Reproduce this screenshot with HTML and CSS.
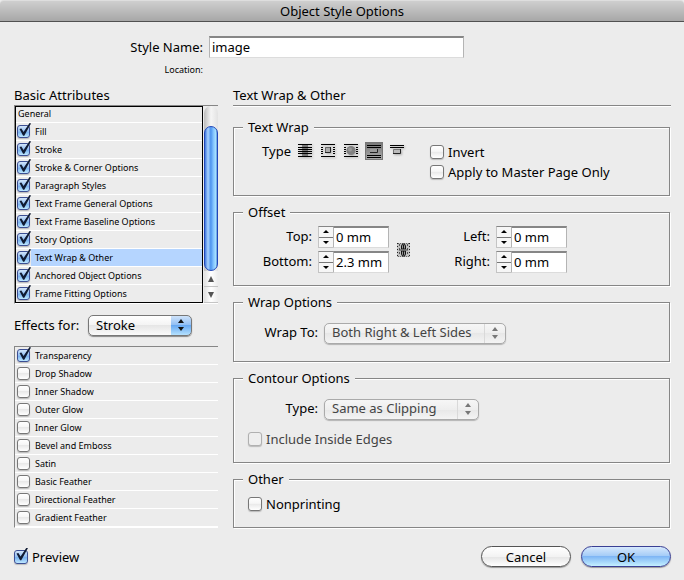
FILE: index.html
```html
<!DOCTYPE html>
<html lang="en">
<head>
<meta charset="utf-8">
<title>Object Style Options</title>
<link rel="stylesheet" href="styles.css">
</head>
<body>
<form class="dialog">
  <header class="titlebar"><h1>Object Style Options</h1></header>

  <div class="identity">
    <label for="style-name">Style Name:</label>
    <input class="field" id="style-name" type="text" value="image">
    <span class="location">Location:</span>
  </div>

  <div class="columns">
    <section class="sidebar">
      <h2>Basic Attributes</h2>
      <div class="listbox">
        <ul class="rows focused">
          <li class="general">General</li>
          <li><label><input type="checkbox" checked><span>Fill</span></label></li>
          <li><label><input type="checkbox" checked><span>Stroke</span></label></li>
          <li><label><input type="checkbox" checked><span>Stroke &amp; Corner Options</span></label></li>
          <li><label><input type="checkbox" checked><span>Paragraph Styles</span></label></li>
          <li><label><input type="checkbox" checked><span>Text Frame General Options</span></label></li>
          <li><label><input type="checkbox" checked><span>Text Frame Baseline Options</span></label></li>
          <li><label><input type="checkbox" checked><span>Story Options</span></label></li>
          <li class="selected"><label><input type="checkbox" checked><span>Text Wrap &amp; Other</span></label></li>
          <li><label><input type="checkbox" checked><span>Anchored Object Options</span></label></li>
          <li><label><input type="checkbox" checked><span>Frame Fitting Options</span></label></li>
        </ul>
        <div class="scrollbar">
          <div class="track"><div class="thumb"></div></div>
          <button type="button" aria-label="Scroll up"><svg width="8" height="6" viewBox="0 0 8 6"><path d="M4 0L7 6H1z"/></svg></button>
          <button type="button" aria-label="Scroll down"><svg width="8" height="6" viewBox="0 0 8 6"><path d="M1 0H7L4 6z"/></svg></button>
        </div>
      </div>

      <div class="effects">
        <label for="effects">Effects for:</label>
        <span class="popup blue">
          <select id="effects"><option>Stroke</option></select>
          <svg width="8" height="12" viewBox="0 0 8 12"><path d="M4 0L7 4H1zM1 8H7L4 12z"/></svg>
        </span>
      </div>

      <div class="listbox">
        <ul class="rows">
          <li><label><input type="checkbox" checked><span>Transparency</span></label></li>
          <li><label><input type="checkbox"><span>Drop Shadow</span></label></li>
          <li><label><input type="checkbox"><span>Inner Shadow</span></label></li>
          <li><label><input type="checkbox"><span>Outer Glow</span></label></li>
          <li><label><input type="checkbox"><span>Inner Glow</span></label></li>
          <li><label><input type="checkbox"><span>Bevel and Emboss</span></label></li>
          <li><label><input type="checkbox"><span>Satin</span></label></li>
          <li><label><input type="checkbox"><span>Basic Feather</span></label></li>
          <li><label><input type="checkbox"><span>Directional Feather</span></label></li>
          <li><label><input type="checkbox"><span>Gradient Feather</span></label></li>
        </ul>
      </div>
    </section>

    <section class="panel">
      <h2 class="ruled">Text Wrap &amp; Other</h2>

      <fieldset class="wrap">
        <legend>Text Wrap</legend>
        <div class="wrap-grid">
          <div class="modes">
            <span class="mode-label">Type</span>
            <button type="button" aria-label="No text wrap">
              <svg width="14" height="14" viewBox="0 0 14 14"><path d="M4 1h6v11H4z" fill="#444" opacity=".6"/><path d="M0 .5H14M0 3.500H14M0 5.500H14M0 7.500H14M0 9.500H14M0 12.500H14" stroke="#000"/></svg>
            </button>
            <button type="button" aria-label="Wrap around bounding box">
              <svg width="14" height="14" viewBox="0 0 14 14"><path d="M0 .5H14M0 12.500H14M0 3.500H2M0 5.500H2M0 7.500H2M0 9.500H2M12 3.500H14M12 5.500H14M12 7.500H14M12 9.500H14" stroke="#000"/><path d="M4 3h6v6H4z" fill="#aaa"/><path d="M4.500 9V3.500H10" fill="none" stroke="#666"/><path d="M4 8.500h5.500V3" fill="none" stroke="#222"/></svg>
            </button>
            <button type="button" aria-label="Wrap around object shape">
              <svg width="14" height="14" viewBox="0 0 14 14"><path d="M0 .5H14M0 12.500H14M0 3.500H2M0 5.500H2M0 7.500H2M0 9.500H2M12 3.500H14M12 5.500H14M12 7.500H14M12 9.500H14" stroke="#000"/><circle cx="7" cy="6.500" r="4.500" fill="#808080"/><circle cx="6" cy="5.500" r="2" fill="#999"/></svg>
            </button>
            <button type="button" class="active" aria-label="Jump object" aria-pressed="true">
              <svg width="14" height="14" viewBox="0 0 14 14"><path d="M0 1.500H14M0 3.500H14M0 11.500H14M0 13.500H14" stroke="#000"/><path d="M3 5h8v4H3z" fill="#999"/><path d="M3 8.500h7.500V5" fill="none" stroke="#222"/></svg>
            </button>
            <button type="button" aria-label="Jump to next column">
              <svg width="14" height="14" viewBox="0 0 14 14"><path d="M0 1.500H14M0 3.500H14" stroke="#000"/><path d="M3 6h8v4H3z" fill="#bbb"/><path d="M3.500 10V5.500H10" fill="none" stroke="#777"/><path d="M3 9.500h7.500V5" fill="none" stroke="#222"/></svg>
            </button>
          </div>
          <div>
            <label class="check"><input type="checkbox">Invert</label>
            <label class="check"><input type="checkbox">Apply to Master Page Only</label>
          </div>
        </div>
      </fieldset>

      <fieldset class="offset">
        <legend>Offset</legend>
        <div class="offset-row">
          <div class="measures">
            <label for="top">Top:</label>
            <span class="spin"><span class="steps"><button type="button" aria-label="Increase top"><svg width="6" height="3" viewBox="0 0 6 3"><path d="M3 0L6 3H0z"/></svg></button><button type="button" aria-label="Decrease top"><svg width="6" height="3" viewBox="0 0 6 3"><path d="M0 0H6L3 3z"/></svg></button></span><input class="field" id="top" type="text" value="0 mm"></span>
            <label for="bottom">Bottom:</label>
            <span class="spin"><span class="steps"><button type="button" aria-label="Increase bottom"><svg width="6" height="3" viewBox="0 0 6 3"><path d="M3 0L6 3H0z"/></svg></button><button type="button" aria-label="Decrease bottom"><svg width="6" height="3" viewBox="0 0 6 3"><path d="M0 0H6L3 3z"/></svg></button></span><input class="field" id="bottom" type="text" value="2.3 mm"></span>
          </div>
          <button type="button" class="chain" aria-label="Make all settings the same">
            <svg width="13" height="14" viewBox="0 0 13 14"><path d="M0 0h13v14H0z" fill="#c0c0c0"/><path d="M.5 0V14M12.500 0V14" stroke="#222" stroke-dasharray="1 2"/><path d="M1 .5H12M1 13.500H12" stroke="#666" stroke-dasharray="1 1"/><path d="M2.500 1V13M10.500 1V13" stroke="#555" stroke-dasharray="2 2"/><g fill="#999" stroke="#111"><path d="M4.500 6V3l1-2h2l1 2v3zM4.500 8h4v3l-1 2h-2l-1-2z"/><path d="M6.500 2v4M6.500 8v4"/><path d="M2 7h3M8 7h3" stroke="#444"/></g></svg>
          </button>
          <div class="measures">
            <label for="left">Left:</label>
            <span class="spin"><span class="steps"><button type="button" aria-label="Increase left"><svg width="6" height="3" viewBox="0 0 6 3"><path d="M3 0L6 3H0z"/></svg></button><button type="button" aria-label="Decrease left"><svg width="6" height="3" viewBox="0 0 6 3"><path d="M0 0H6L3 3z"/></svg></button></span><input class="field" id="left" type="text" value="0 mm"></span>
            <label for="right">Right:</label>
            <span class="spin"><span class="steps"><button type="button" aria-label="Increase right"><svg width="6" height="3" viewBox="0 0 6 3"><path d="M3 0L6 3H0z"/></svg></button><button type="button" aria-label="Decrease right"><svg width="6" height="3" viewBox="0 0 6 3"><path d="M0 0H6L3 3z"/></svg></button></span><input class="field" id="right" type="text" value="0 mm"></span>
          </div>
        </div>
      </fieldset>

      <fieldset class="wrap-options">
        <legend>Wrap Options</legend>
        <div class="choice">
          <label for="wrap-to">Wrap To:</label>
          <span class="popup wide">
            <select id="wrap-to" disabled><option>Both Right &amp; Left Sides</option></select>
            <svg width="8" height="12" viewBox="0 0 8 12"><path d="M4 0L7 4H1zM1 8H7L4 12z"/></svg>
          </span>
        </div>
      </fieldset>

      <fieldset class="contour">
        <legend>Contour Options</legend>
        <div class="choice">
          <label for="contour-type">Type:</label>
          <span class="popup medium">
            <select id="contour-type" disabled><option>Same as Clipping</option></select>
            <svg width="8" height="12" viewBox="0 0 8 12"><path d="M4 0L7 4H1zM1 8H7L4 12z"/></svg>
          </span>
        </div>
        <label class="check dim"><input type="checkbox" disabled>Include Inside Edges</label>
      </fieldset>

      <fieldset class="other">
        <legend>Other</legend>
        <label class="check"><input type="checkbox">Nonprinting</label>
      </fieldset>
    </section>
  </div>

  <footer class="actions">
    <label class="check preview"><input type="checkbox" checked>Preview</label>
    <button type="button" class="pill">Cancel</button>
    <button type="submit" class="pill default">OK</button>
  </footer>
</form>
</body>
</html>
```
FILE: styles.css
```css
* {
  box-sizing: border-box;
}

body {
  margin: 0;
  background: #ececec;
  color: #000;
  font: 13px/16px "Lucida Grande", "Noto Sans", sans-serif;
}

h1,
h2 {
  margin: 0;
  font-size: 13px;
  font-weight: 400;
}

button,
input,
select {
  margin: 0;
  padding: 0;
  color: inherit;
  font: inherit;
}

button {
  display: flex;
  align-items: center;
  justify-content: center;
  border: 0;
  background: none;
}

svg {
  display: block;
  flex: none;
}

/* Title bar */
.titlebar {
  height: 22px;
  padding-top: 2px;
  border-top: 1px solid #dedede;
  border-bottom: 1px solid #515151;
  border-radius: 4px 4px 0 0;
  background: linear-gradient(#cfcfcf, #a7a7a7);
  text-align: center;
}

/* Name and location */
.identity {
  display: grid;
  grid-template-columns: 203px 255px;
  column-gap: 6px;
  row-gap: 4px;
  align-items: center;
  padding-top: 14px;
  text-align: right;
}

.location {
  font-size: 9px;
}

.field {
  height: 22px;
  min-width: 0;
  padding: 0 2px 2px;
  border: 1px solid #b4b4b4;
  border-top: 2px solid #868686;
  border-bottom-color: #dcdcdc;
  border-radius: 0;
  background: #fff;
}

/* Columns */
.columns {
  display: grid;
  grid-template-columns: 204px 1fr;
  column-gap: 15px;
  padding: 10px 13px 0 14px;
}

h2 {
  height: 17px;
  line-height: 14px;
}

/* Attribute lists */
.listbox {
  display: flex;
  border: 1px solid #868686;
  border-right: 0;
  border-bottom-color: #fff;
}

.rows {
  flex: 1;
  margin: 0;
  padding: 0;
  list-style: none;
  font-size: 9px;
  line-height: 17px;
}

.rows li {
  height: 18px;
  border-bottom: 1px solid #fff;
}

.rows.focused {
  padding: 1px 1px 0;
  outline: 1px solid #000;
  outline-offset: -1px;
}

.rows .general {
  height: 16px;
  padding-left: 2px;
  line-height: 14px;
}

.rows label {
  display: flex;
  align-items: center;
  height: 17px;
}

.rows label span {
  flex: 1;
  padding-left: 4px;
}

.selected span {
  background: #b5d5ff;
}

.rows input[type="checkbox"] {
  width: 13px;
  height: 13px;
  margin: 0 1px 0 2px;
}

.focused input[type="checkbox"] {
  margin-left: 1px;
}

/* Scrollbar */
.scrollbar {
  display: flex;
  flex-direction: column;
  width: 14px;
  margin-left: 1px;
}

.track {
  flex: 1;
  padding-top: 20px;
  border-radius: 7px 7px 0 0;
  background: linear-gradient(90deg, #bcbcbc, #f5f5f5 50%, #e2e2e2);
}

.thumb {
  height: 100%;
  border: 1px solid #2147b8;
  border-radius: 7px;
  background: linear-gradient(90deg, #3f77dd, #a9d3ff 25%, #4c93ee 48%, #82c3ff 70%, #a7e2ff 90%, #4e86d8);
}

.scrollbar button {
  height: 16px;
  border-bottom: 1px solid #c4c4c4;
  background: linear-gradient(90deg, #e0e0e0, #fff 50%, #ececec);
  fill: #555;
}

/* Pop-up menus */
.popup {
  position: relative;
  display: block;
  width: 104px;
}

.popup.medium {
  width: 155px;
}

.popup.wide {
  width: 182px;
}

.popup select {
  display: block;
  width: 100%;
  height: 21px;
  padding: 0 26px 2px 7px;
  appearance: none;
  border: 1px solid #777;
  border-radius: 5px;
  background: linear-gradient(90deg, transparent calc(100% - 21px), #d9d9d9 calc(100% - 21px), #d9d9d9 calc(100% - 20px), transparent calc(100% - 20px)), linear-gradient(#fff, #f3f3f3 50%, #e6e6e6 50%, #fafafa);
  box-shadow: 0 1px 1px #8a8a8a;
}

.popup select:disabled {
  border-color: #aaa;
  background: linear-gradient(90deg, transparent calc(100% - 21px), #d9d9d9 calc(100% - 21px), #d9d9d9 calc(100% - 20px), transparent calc(100% - 20px)), linear-gradient(#f6f6f6, #eee 50%, #e7e7e7 50%, #f4f4f4);
  box-shadow: 0 1px 1px #b4b4b4;
  color: #444;
  opacity: 1;
}

.popup.blue select {
  background: linear-gradient(#cfe3fa, #8dbcf3 50%, #69a9f1 50%, #b5e2ff) right / 20px 100% no-repeat, linear-gradient(#fff, #f3f3f3 50%, #e6e6e6 50%, #fafafa);
}

.popup svg {
  position: absolute;
  top: 4px;
  right: 7px;
  fill: #777;
  pointer-events: none;
}

.popup.blue svg {
  fill: #111;
}

.effects {
  display: flex;
  align-items: center;
  justify-content: space-between;
  margin: 11px 26px 10px 0;
}

.effects label,
.choice label,
.measures label {
  padding-bottom: 2px;
}

/* Check boxes */
input[type="checkbox"] {
  position: relative;
  flex: none;
  width: 14px;
  height: 14px;
  appearance: none;
  border: 1px solid #777;
  border-radius: 3px;
  background: linear-gradient(#fff, #f6f6f6 45%, #e9e9e9 50%, #fff);
  box-shadow: 0 1px 1px #bbb;
}

input[type="checkbox"]:checked {
  border-color: #3c4f94;
  background: linear-gradient(#d2e5fa, #8fbdf3 50%, #78b2f0 55%, #bfe8ff);
}

input[type="checkbox"]:checked::before {
  position: absolute;
  top: -3px;
  left: 1px;
  width: 12px;
  height: 13px;
  background: #101b33;
  clip-path: polygon(4% 46%, 20% 42%, 38% 70%, 88% 0, 100% 4%, 44% 98%, 34% 98%);
  content: "";
}

input[type="checkbox"]:disabled {
  border-color: #b0b0b0;
  background: #eee;
}

.check {
  display: flex;
  align-items: center;
  gap: 4px;
  height: 20px;
}

.check.dim {
  color: #444;
}

/* Option panel */
.ruled {
  height: 18px;
  margin-bottom: 13px;
  border-bottom: 1px solid #868686;
  box-shadow: 0 1px #fff;
}

fieldset {
  min-width: 0;
  margin: 0 1px 8px 0;
  padding: 12px 14px;
  border: 1px solid #868686;
  box-shadow: 1px 1px #fff, inset 1px 1px #fff;
}

legend {
  margin-left: -5px;
  padding: 0 5px;
  background: #ececec;
}

.wrap,
.other {
  padding-top: 7px;
  padding-bottom: 13px;
}

.wrap-grid {
  display: grid;
  grid-template-columns: 182px 1fr;
}

.modes {
  display: flex;
  gap: 5px;
  align-items: center;
  height: 18px;
}

.mode-label {
  width: 43px;
  text-align: right;
}

.modes button {
  width: 18px;
  height: 18px;
}

.modes button svg {
  filter: drop-shadow(1px 1px 1px #aaa);
}

.modes .active {
  background: linear-gradient(#777, #aaa);
  box-shadow: inset 0 0 0 1px #777;
}

.modes .active svg {
  filter: none;
}

/* Offsets */
.offset {
  padding-top: 6px;
}

.offset-row {
  display: flex;
  gap: 8px;
  align-items: center;
}

.measures {
  display: grid;
  grid-template-columns: 64px 71px;
  gap: 3px 6px;
  align-items: center;
  text-align: right;
}

.chain {
  width: 13px;
  margin-right: 8px;
}

.spin {
  display: flex;
}

.spin .field {
  width: 56px;
}

.steps {
  display: flex;
  flex-direction: column;
  width: 15px;
  height: 22px;
  border: 1px solid #c4c4c4;
  border-top: 1px solid #868686;
  border-right: 0;
  background: #f6f6f6;
}

.steps button {
  flex: 1;
}

.steps button + button {
  border-top: 1px solid #777;
}

/* Menu rows */
.choice {
  display: grid;
  grid-template-columns: 70px auto;
  justify-content: start;
  column-gap: 6px;
  align-items: center;
  height: 22px;
  text-align: right;
}

.wrap-options {
  padding-bottom: 17px;
}

.contour .check {
  margin-top: 9px;
}

.contour {
  padding-bottom: 13px;
}

/* Footer */
.actions {
  display: flex;
  gap: 10px;
  align-items: center;
  padding: 10px 13px 12px 14px;
}

.preview {
  margin-right: auto;
}

.pill {
  width: 90px;
  height: 21px;
  border: 1px solid #555;
  border-radius: 11px;
  background: linear-gradient(#fff, #f3f3f3 50%, #e4e4e4 50%, #fff);
  box-shadow: 0 1px 1px #999;
}

.pill.default {
  border-color: #3a3f94;
  background: linear-gradient(#d6e8fc, #a3cbf7 48%, #7fb6f5 50%, #c4f0ff);
}
```
